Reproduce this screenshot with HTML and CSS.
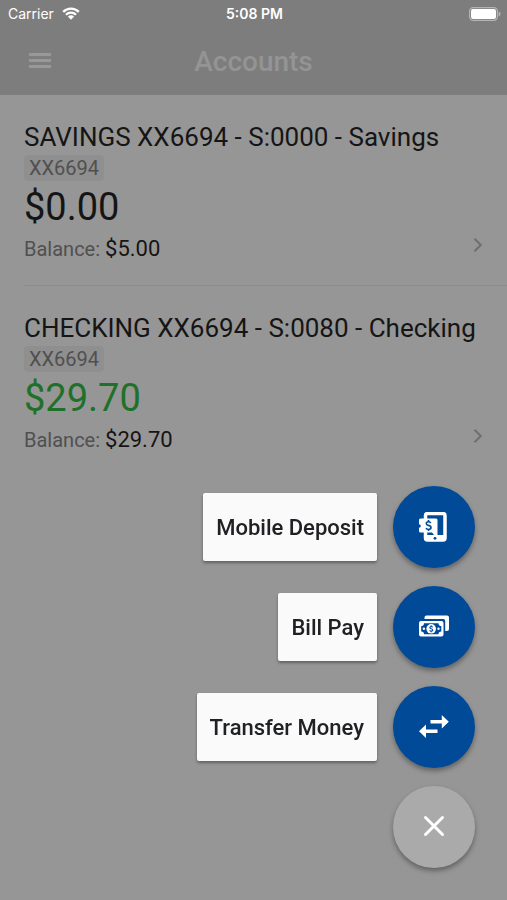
FILE: index.html
```html
<!DOCTYPE html>
<html lang="en">
<head>
  <meta charset="utf-8">
  <meta name="viewport" content="width=device-width, initial-scale=1">
  <title>Accounts</title>
  <link rel="stylesheet" href="styles.css">
</head>
<body>
  <header class="header">
    <div class="status-bar">
      <span class="carrier">
        Carrier
        <svg class="wifi" viewBox="0 0 18 13" aria-hidden="true">
          <path d="M1.2 4.9a11 11 0 0 1 15.6 0M4 7.8a7 7 0 0 1 10 0" fill="none" stroke="#fff" stroke-width="2.3"/>
          <path d="M5.9 9.6a4.4 4.4 0 0 1 6.2 0L9 12.7z" fill="#fff"/>
        </svg>
      </span>
      <span class="time">5:08 PM</span>
      <svg class="battery" viewBox="0 0 32 14" aria-hidden="true">
        <rect x="0.6" y="0.6" width="27.8" height="12.8" rx="3.6" fill="none" stroke="#b4b4b4" stroke-width="1.2"/>
        <rect x="2" y="2" width="25" height="10" rx="2" fill="#fff"/>
        <path d="M29.6 4.6q2 .6 2 2.4t-2 2.4z" fill="#b4b4b4"/>
      </svg>
    </div>
    <div class="toolbar">
      <button class="menu-button" aria-label="Menu">
        <svg viewBox="0 0 22 16"><path d="M0 1.5h22M0 7.5h22M0 13.5h22" stroke="#989898" stroke-width="3"/></svg>
      </button>
      <h1>Accounts</h1>
    </div>
  </header>

  <main class="accounts">
    <a class="account" href="#savings">
      <h2>SAVINGS XX6694 - S:0000 - Savings</h2>
      <span class="tag">XX6694</span>
      <span class="amount">$0.00</span>
      <span class="balance-row">
        <span class="balance">Balance: <b>$5.00</b></span>
        <svg class="chevron" viewBox="0 0 10 16"><path d="M1.5 1.8L7.8 8l-6.3 6.2" fill="none" stroke="#6f6f6f" stroke-width="2"/></svg>
      </span>
    </a>
    <a class="account" href="#checking">
      <h2>CHECKING XX6694 - S:0080 - Checking</h2>
      <span class="tag">XX6694</span>
      <span class="amount positive">$29.70</span>
      <span class="balance-row">
        <span class="balance">Balance: <b>$29.70</b></span>
        <svg class="chevron" viewBox="0 0 10 16"><path d="M1.5 1.8L7.8 8l-6.3 6.2" fill="none" stroke="#6f6f6f" stroke-width="2"/></svg>
      </span>
    </a>
  </main>

  <!-- Speed dial -->
  <div class="speed-dial">
    <div class="action">
      <label class="action-label" for="deposit">Mobile Deposit</label>
      <button class="fab" id="deposit">
        <svg viewBox="0 0 30 30">
          <rect x="6.5" y="1.5" width="19.5" height="26.5" rx="2" fill="none" stroke="#fff" stroke-width="3.5"/>
          <path d="M6 23h20v5H6z" fill="#fff"/>
          <path fill="#fff" d="M1.500 6.500H17A1.500 1.500 0 0 1 18.500 8v15.500h-3L13 20.500H1.500A1.500 1.500 0 0 1 0 19v-3.200a1.800 1.800 0 0 0 0-3.600V8a1.500 1.500 0 0 1 1.500-1.500z"/>
          <path d="M11.800 11q-.8-1.200-2.300-1.200-2.200 0-2.200 1.700 0 1.400 2.200 1.900 2.500.6 2.500 2.200 0 1.900-2.400 1.900-1.800 0-2.600-1.300M9.500 8v1.800M9.500 17.400v1.700" fill="none" stroke="#004a97" stroke-width="1.600"/>
          <circle cx="16" cy="26.300" r="1.400" fill="#004a97"/>
        </svg>
      </button>
    </div>
    <div class="action">
      <label class="action-label" for="billpay">Bill Pay</label>
      <button class="fab" id="billpay">
        <svg viewBox="0 0 30 30">
          <path fill="#fff" d="M7.500 3.500H28a2 2 0 0 1 2 2V17a2 2 0 0 1-2 2h-1.800V9a1.900 1.900 0 0 0-1.900-1.900H5.500V5.500a2 2 0 0 1 2-2z"/>
          <rect x="0" y="9" width="24.500" height="15.500" rx="2" fill="#fff"/>
          <path fill="#004a97" d="M5 11.300h14.500a2.800 2.800 0 0 0 2.800 2.800v5.300a2.800 2.800 0 0 0-2.800 2.800H5a2.800 2.800 0 0 0-2.800-2.800v-5.300A2.800 2.800 0 0 0 5 11.300z"/>
          <circle cx="12.200" cy="16.800" r="4.800" fill="#fff"/>
          <circle cx="4.900" cy="16.800" r="1.200" fill="#fff"/>
          <circle cx="19.500" cy="16.800" r="1.200" fill="#fff"/>
          <path d="M13.700 15.200q-.5-.7-1.500-.7-1.400 0-1.400 1 0 .8 1.400 1.200 1.500.4 1.500 1.300 0 1.100-1.500 1.100-1 0-1.600-.8M12.200 13.300v1.200M12.200 19.100v1.200" fill="none" stroke="#004a97" stroke-width="1.100"/>
        </svg>
      </button>
    </div>
    <div class="action">
      <label class="action-label" for="transfer">Transfer Money</label>
      <button class="fab" id="transfer">
        <svg viewBox="0 0 30 30">
          <path fill="#fff" d="M11.500 8h11.300V3L29.800 9.700l-7 6.700v-5H11.500zM18.500 17.600V21H7v5L0 19.300l7-6.700v5z"/>
        </svg>
      </button>
    </div>
    <div class="action">
      <button class="fab close" aria-label="Close">
        <svg viewBox="0 0 30 30"><path d="M6.500 5.500l17 17M23.500 5.500l-17 17" stroke="#fff" stroke-width="3" stroke-linecap="round"/></svg>
      </button>
    </div>
  </div>
</body>
</html>
```
FILE: styles.css
```css
* {
  box-sizing: border-box;
}
body {
  margin: 0;
  min-height: 100vh;
  font-family: Roboto, "Liberation Sans", sans-serif;
  background-color: #969696;
  color: #151515;
}
h1, h2 {
  margin: 0;
}
button {
  border: 0;
  padding: 0;
  cursor: pointer;
}
svg {
  display: block;
}
.header {
  background-color: #7d7d7d;
}
.status-bar {
  display: grid;
  grid-template-columns: 1fr auto 1fr;
  align-items: center;
  height: 27px;
  padding: 0 6px 0 8px;
  font-family: Inter, sans-serif;
  font-size: 14px;
  color: #fff;
}
.carrier {
  display: flex;
  align-items: center;
  gap: 8px;
}
.wifi {
  width: 18px;
  height: 13px;
}
.time {
  font-weight: 600;
}
.battery {
  width: 32px;
  height: 14px;
  justify-self: end;
}
/* Side columns are equal so the title stays centered */
.toolbar {
  display: grid;
  grid-template-columns: 1fr auto 1fr;
  align-items: center;
  height: 68px;
  padding: 0 29px;
}
.menu-button {
  width: 22px;
  background: none;
}
.toolbar h1 {
  font-size: 28px;
  font-weight: 500;
  color: #949494;
}
.accounts {
  padding-left: 24px;
}
.account {
  display: flex;
  flex-direction: column;
  align-items: flex-start;
  padding: 24px 24px 20px 0;
  color: inherit;
  text-decoration: none;
}
.account + .account {
  border-top: 1px solid #8d8d8d;
}
.account h2 {
  font-size: 26px;
  line-height: 36px;
  font-weight: 400;
}
.tag {
  padding: 0 5px;
  border-radius: 4px;
  background-color: #8f8f8f;
  font-size: 20px;
  line-height: 26px;
  color: #505050;
}
.amount {
  font-size: 38px;
  line-height: 52px;
}
.positive {
  color: #1f7029;
}
.balance-row {
  display: flex;
  justify-content: space-between;
  align-items: flex-start;
  width: 100%;
}
.balance {
  font-size: 20px;
  line-height: 32px;
  color: #505050;
}
.balance b {
  font-size: 22px;
  font-weight: 400;
  color: #151515;
}
.chevron {
  width: 10px;
  height: 16px;
  margin-top: 4px;
}
.speed-dial {
  position: fixed;
  right: 32px;
  bottom: 32px;
  display: flex;
  flex-direction: column;
  gap: 18px;
}
.action {
  display: flex;
  justify-content: flex-end;
  align-items: center;
  gap: 16px;
}
.action-label {
  padding: 2px 13px 0;
  border-radius: 2px;
  background-color: #fafafa;
  box-shadow: 0 2px 3px rgba(0, 0, 0, 0.35);
  font-size: 22px;
  line-height: 66px;
  font-weight: 500;
  color: #202124;
}
.fab {
  display: flex;
  justify-content: center;
  align-items: center;
  width: 82px;
  height: 82px;
  border-radius: 50%;
  background-color: #004a97;
  box-shadow: 0 3px 5px rgba(0, 0, 0, 0.35);
}
.fab svg {
  width: 30px;
  height: 30px;
}
.close {
  background-color: #aaa;
}
```
